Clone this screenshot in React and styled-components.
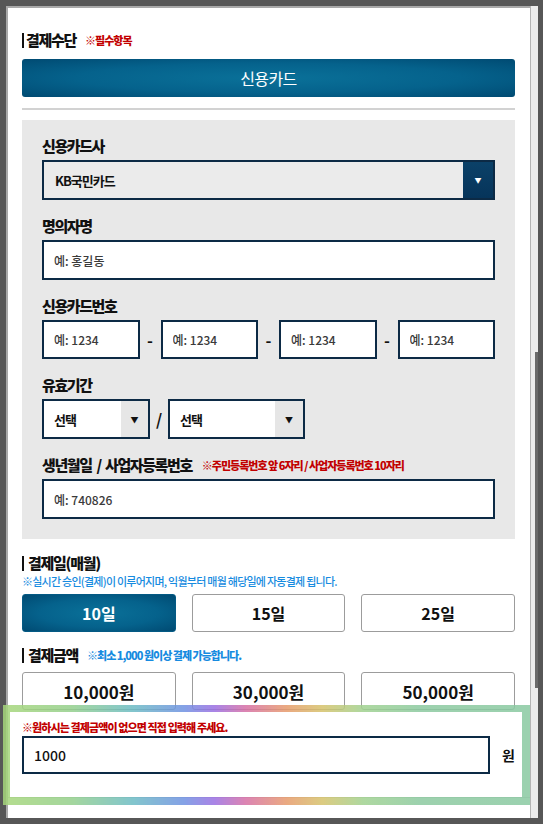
import styled, { createGlobalStyle } from 'styled-components'

const GlobalStyle = createGlobalStyle`
  html, body {
    margin: 0;
    padding: 0;
    background: #575757;
  }
  body {
    font-family: "Noto Sans CJK KR", "Noto Sans", sans-serif;
    color: #111;
  }
  * {
    box-sizing: border-box;
  }
`

const NAVY = '#0c2a45'
const RED = '#c20000'

const Shell = styled.div`
  display: flex;
  height: 824px;
  padding: 6px 5px 6px 6px;
`

const Panel = styled.div`
  flex: 1;
  display: flex;
  flex-direction: column;
  background: #fff;
  border-top: 2px solid #a9a9a9;
  border-left: 2px solid #a9a9a9;
  padding: 22px 15px 0 14px;
`

const ScrollTrack = styled.div`
  width: 8px;
  background: #ececec;
  border-left: 1px solid #b4b4b4;
  padding: 346px 0 130px 4px;
`

const ScrollThumb = styled.div`
  width: 3px;
  height: 336px;
  background: #6a6a6a;
`

const Title = styled.h2`
  margin: ${p => p.$top || 0}px 0 0;
  display: flex;
  align-items: center;
  font-size: 15px;
  line-height: 20px;
  font-weight: 900;
  letter-spacing: -1.3px;
  color: #111;
`

const Bar = styled.span`
  display: inline-block;
  width: 2px;
  height: 15px;
  background: #111;
  margin-right: ${p => p.$gap || 2}px;
`

const Note = styled.span`
  margin-left: ${p => p.$gap || 8}px;
  font-size: 11px;
  font-weight: 900;
  letter-spacing: -1px;
  color: ${p => (p.$blue ? '#178be0' : RED)};
`

const SubNote = styled.p`
  margin: 1px 0 0;
  font-size: 11px;
  line-height: 14px;
  font-weight: 500;
  letter-spacing: -0.75px;
  color: #178be0;
`

const MethodButton = styled.button`
  margin-top: 9px;
  height: 38px;
  border: none;
  border-radius: 3px;
  background: radial-gradient(ellipse at center, #0a7199 0%, #05628c 55%, #004a72 100%);
  color: #fff;
  font-family: inherit;
  font-size: 16px;
  letter-spacing: -0.6px;
`

const Divider = styled.hr`
  margin: 11px 0 0;
  border: none;
  height: 2px;
  background: #d2d2d2;
`

const CardBox = styled.div`
  margin-top: 10px;
  background: #e8e8e8;
  padding: 16px 20px 20px;
  display: flex;
  flex-direction: column;
  gap: 16px;
`

const Field = styled.div`
  display: flex;
  flex-direction: column;
  gap: 4px;
`

const Label = styled.label`
  display: flex;
  align-items: center;
  font-size: 15px;
  line-height: 20px;
  font-weight: 900;
  letter-spacing: -1.4px;
  color: #111;
`

const Slash = styled.span`
  margin: 0 4px 0 5px;
`

const TextInput = styled.input`
  flex: ${p => (p.$grow ? '1 1 0' : '0 0 auto')};
  width: 100%;
  min-width: 0;
  height: ${p => p.$h || 40}px;
  border: 2px solid ${NAVY};
  background: #fff;
  padding: 0 10px;
  font-family: inherit;
  font-size: ${p => p.$size || 12}px;
  font-weight: 500;
  color: #111;
  outline: none;
  &::placeholder {
    color: #3a3a3a;
  }
`

const SelectBox = styled.div`
  display: flex;
  width: ${p => (p.$w ? `${p.$w}px` : '100%')};
  height: 40px;
  border: 2px solid ${NAVY};
  background: ${p => (p.$dark ? '#ebebeb' : '#fff')};
`

const SelectValue = styled.span`
  flex: 1;
  display: flex;
  align-items: center;
  padding-left: ${p => p.$pad || 10}px;
  font-size: 13px;
  font-weight: 700;
  letter-spacing: -1px;
  color: #111;
`

const SelectArrow = styled.span`
  width: ${p => p.$w}px;
  display: flex;
  align-items: center;
  justify-content: center;
  background: ${p => (p.$dark ? 'linear-gradient(180deg, #0b4168, #06345a)' : '#e6e6e6')};
  color: ${p => (p.$dark ? '#fff' : '#111')};
  font-size: ${p => (p.$dark ? 7 : 8)}px;
`

const SplitRow = styled.div`
  display: flex;
  align-items: center;
`

const Sep = styled.span`
  flex: 0 0 ${p => p.$w}px;
  text-align: center;
  font-size: 16px;
  font-weight: 700;
  color: #111;
`

const ChoiceRow = styled.div`
  margin-top: ${p => p.$top}px;
  display: grid;
  grid-template-columns: repeat(3, 1fr);
  gap: 16px;
`

const Choice = styled.button`
  height: 38px;
  border: 1px solid ${p => (p.$active ? '#045a84' : '#9c9c9c')};
  border-radius: 3px;
  background: ${p =>
    p.$active
      ? 'radial-gradient(ellipse at center, #0a7199 0%, #05628c 55%, #004a72 100%)'
      : '#fff'};
  color: ${p => (p.$active ? '#fff' : '#111')};
  font-family: inherit;
  font-size: ${p => p.$size || 16}px;
  font-weight: 700;
`

const CustomAmount = styled.div`
  position: relative;
  margin: 2px -15px 0 -14px;
  padding: 8px 15px 23px 14px;
  border-bottom: 1px solid #cfcfcf;

  &::after {
    content: '';
    position: absolute;
    top: -7px;
    left: -5px;
    right: 0;
    bottom: -8px;
    border-style: solid;
    border-width: 7px 8px 8px 7px;
    border-image: linear-gradient(
        90deg,
        #a6d67c 0%,
        #95d08c 12%,
        #6dbcc4 24%,
        #6f92e2 34%,
        #9b6fe2 40%,
        #d66fa6 46%,
        #e79b6c 54%,
        #d6c36c 61%,
        #a0d290 69%,
        #8ccaa0 80%,
        #8ac9a2 100%
      )
      1;
    opacity: 0.85;
    pointer-events: none;
  }
`

const RedNote = styled.p`
  margin: 0;
  font-size: 11px;
  line-height: 14px;
  font-weight: 900;
  letter-spacing: -0.9px;
  color: ${RED};
`

const AmountRow = styled.div`
  margin-top: 2px;
  display: flex;
  align-items: center;
  gap: 12px;
`

const Unit = styled.span`
  font-size: 14px;
  font-weight: 700;
  color: #111;
`

function CardNumber() {
  const parts = [0, 1, 2, 3]
  return (
    <SplitRow>
      {parts.map(i => (
        <SplitPart key={i} last={i === 3} />
      ))}
    </SplitRow>
  )
}

function SplitPart({ last }) {
  return (
    <>
      <TextInput $grow $h={39} placeholder="예: 1234" />
      {!last && <Sep $w={21}>-</Sep>}
    </>
  )
}

export default function App() {
  return (
    <>
      <GlobalStyle />
      <Shell>
        <Panel>
          <Title>
            <Bar />
            결제수단
            <Note $gap={9}>※필수항목</Note>
          </Title>
          <MethodButton>신용카드</MethodButton>
          <Divider />

          <CardBox>
            <Field>
              <Label>신용카드사</Label>
              <SelectBox $dark>
                <SelectValue $pad={11}>KB국민카드</SelectValue>
                <SelectArrow $dark $w={30}>▼</SelectArrow>
              </SelectBox>
            </Field>
            <Field>
              <Label>명의자명</Label>
              <TextInput placeholder="예: 홍길동" />
            </Field>
            <Field>
              <Label>신용카드번호</Label>
              <CardNumber />
            </Field>
            <Field>
              <Label>유효기간</Label>
              <SplitRow>
                <SelectBox $w={108}>
                  <SelectValue>선택</SelectValue>
                  <SelectArrow $w={27}>▼</SelectArrow>
                </SelectBox>
                <Sep $w={18}>/</Sep>
                <SelectBox $w={137}>
                  <SelectValue>선택</SelectValue>
                  <SelectArrow $w={28}>▼</SelectArrow>
                </SelectBox>
              </SplitRow>
            </Field>
            <Field>
              <Label>
                생년월일<Slash>/</Slash>사업자등록번호
                <Note $gap={10}>※주민등록번호 앞 6자리 / 사업자등록번호 10자리</Note>
              </Label>
              <TextInput placeholder="예: 740826" />
            </Field>
          </CardBox>

          <Title $top={14}>
            <Bar $gap={4} />
            결제일(매월)
          </Title>
          <SubNote>※실시간 승인(결제)이 이루어지며, 익월부터 매월 해당일에 자동결제 됩니다.</SubNote>
          <ChoiceRow $top={6}>
            <Choice $active>10일</Choice>
            <Choice>15일</Choice>
            <Choice>25일</Choice>
          </ChoiceRow>

          <Title $top={13}>
            <Bar $gap={4} />
            결제금액
            <Note $blue $gap={9}>※최소 1,000 원이상 결제 가능합니다.</Note>
          </Title>
          <ChoiceRow $top={7}>
            <Choice $size={17}>10,000원</Choice>
            <Choice $size={17}>30,000원</Choice>
            <Choice $size={17}>50,000원</Choice>
          </ChoiceRow>

          <CustomAmount>
            <RedNote>※원하시는 결제금액이 없으면 직접 입력해 주세요.</RedNote>
            <AmountRow>
              <TextInput $grow $h={38} $size={14} defaultValue="1000" />
              <Unit>원</Unit>
            </AmountRow>
          </CustomAmount>
        </Panel>
        <ScrollTrack>
          <ScrollThumb />
        </ScrollTrack>
      </Shell>
    </>
  )
}
